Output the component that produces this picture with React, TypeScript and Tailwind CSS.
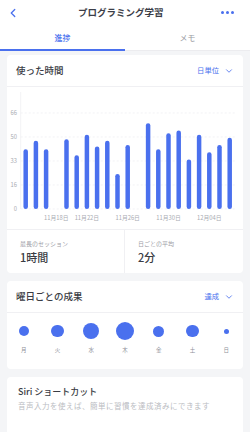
import { ChevronLeft, ChevronDown } from "lucide-react";

const BLUE = "#4a70ee";

// minutes per day, 11/15 .. 12/05
const usage = [41, 47, 41, 0, 48, 37, 51, 43, 47, 24, 44, 0, 59, 41, 52, 54, 34, 51, 39, 44, 49];
const dateLabels: { slot: number; text: string }[] = [
  { slot: 3, text: "11月18日" },
  { slot: 6, text: "11月22日" },
  { slot: 10, text: "11月26日" },
  { slot: 14, text: "11月30日" },
  { slot: 18, text: "12月04日" },
];
const ticks = [66, 50, 33, 16, 0];

const weekdays = [
  { day: "月", size: 10.5 },
  { day: "火", size: 12.5 },
  { day: "水", size: 16 },
  { day: "木", size: 18 },
  { day: "金", size: 11 },
  { day: "土", size: 12.5 },
  { day: "日", size: 5 },
];

function UsageChart() {
  const top = 26;
  const base = 122;
  const axisX = 13.7;
  const slotX = (i: number) => 18.7 + 10.2 * i;
  const barH = (v: number) => (v / 66) * (base - top);

  return (
    <svg width="236" height="142" viewBox="0 0 236 142" className="block">
      <line x1={axisX} y1={5} x2={axisX} y2={base} stroke="#efeff2" strokeWidth="0.8" />
      {ticks.map((t, i) => {
        const y = top + i * 24;
        return (
          <g key={t}>
            <line x1={axisX} y1={y} x2={229} y2={y} stroke="#ececf0" strokeWidth="0.7" strokeDasharray="2 2" />
            <text x={10} y={y + 2} textAnchor="end" fontSize="5.8" fill="#a9abb2">
              {t}
            </text>
          </g>
        );
      })}
      {usage.map((v, i) =>
        v > 0 ? (
          <rect key={i} x={slotX(i) - 2.25} y={base - barH(v)} width={4.5} height={barH(v)} rx={2.25} fill={BLUE} />
        ) : null
      )}
      {dateLabels.map((d) => (
        <text key={d.text} x={slotX(d.slot)} y={133} textAnchor="middle" fontSize="5.8" fill="#a9abb2">
          {d.text}
        </text>
      ))}
    </svg>
  );
}

function CardHeader({ title, action }: { title: string; action: string }) {
  return (
    <div className="flex h-[32px] items-center justify-between border-b border-[#f0f0f3] pl-[9px] pr-[9px]">
      <span className="text-[9.5px] font-medium leading-none text-[#3a3c44]">{title}</span>
      <div className="flex items-center gap-[5px] text-[7.3px] leading-none" style={{ color: BLUE }}>
        <span>{action}</span>
        <ChevronDown size={10} strokeWidth={2} />
      </div>
    </div>
  );
}

export default function App() {
  return (
    <div className="h-[432px] w-[250px] overflow-hidden bg-[#f4f5f7]" style={{ fontFamily: "'Noto Sans CJK JP', 'Noto Sans', sans-serif" }}>
      <div className="bg-white">
        <div className="flex h-[25px] items-center justify-between pl-[6px] pr-[16px]">
          <ChevronLeft size={14} strokeWidth={2.2} color={BLUE} />
          <span className="text-[9.5px] font-bold leading-none text-[#3c3e48]">プログラミング学習</span>
          <div className="flex gap-[2.5px]">
            <span className="h-[2.5px] w-[2.5px] rounded-full" style={{ background: BLUE }} />
            <span className="h-[2.5px] w-[2.5px] rounded-full" style={{ background: BLUE }} />
            <span className="h-[2.5px] w-[2.5px] rounded-full" style={{ background: BLUE }} />
          </div>
        </div>
        <div className="flex h-[26px] border-b border-[#ececef]">
          <div className="relative flex flex-1 items-center justify-center text-[8px] font-medium" style={{ color: BLUE }}>
            進捗
            <span className="absolute bottom-[-1px] left-0 right-0 h-[2px]" style={{ background: BLUE }} />
          </div>
          <div className="flex flex-1 items-center justify-center text-[8px] text-[#9a9ca3]">メモ</div>
        </div>
      </div>

      <div className="flex flex-col gap-[8px] px-[7px] pt-[4px]">
        <div className="rounded-[4px] bg-white">
          <CardHeader title="使った時間" action="日単位" />
          <UsageChart />
          <div className="grid h-[44px] grid-cols-2 border-t border-[#f0f0f3]">
            <div className="flex flex-col justify-center gap-[5px] border-r border-[#f0f0f3] pl-[13px]">
              <span className="text-[6px] leading-none text-[#9ea0a7]">最長のセッション</span>
              <span className="text-[11px] font-medium leading-none text-[#3a3c44]">1時間</span>
            </div>
            <div className="flex flex-col justify-center gap-[5px] pl-[13px]">
              <span className="text-[6px] leading-none text-[#9ea0a7]">日ごとの平均</span>
              <span className="text-[11px] font-medium leading-none text-[#3a3c44]">2分</span>
            </div>
          </div>
        </div>

        <div className="rounded-[4px] bg-white">
          <CardHeader title="曜日ごとの成果" action="達成" />
          <div className="grid h-[56px] grid-cols-7">
            {weekdays.map((w) => (
              <div key={w.day} className="flex flex-col items-center pt-[8px]">
                <div className="flex h-[20px] items-center justify-center">
                  <span className="rounded-full" style={{ width: w.size, height: w.size, background: BLUE }} />
                </div>
                <span className="mt-[7px] text-[5.5px] leading-none text-[#8e9098]">{w.day}</span>
              </div>
            ))}
          </div>
        </div>

        <div className="h-[70px] rounded-[4px] bg-white px-[11px] pt-[10px]">
          <div className="text-[9px] font-medium leading-none text-[#3a3c44]">Siri ショートカット</div>
          <div className="mt-[6px] text-[7.5px] leading-none tracking-[0.5px] text-[#babcc2]">
            音声入力を使えば、簡単に習慣を達成済みにできます
          </div>
        </div>
      </div>
    </div>
  );
}
